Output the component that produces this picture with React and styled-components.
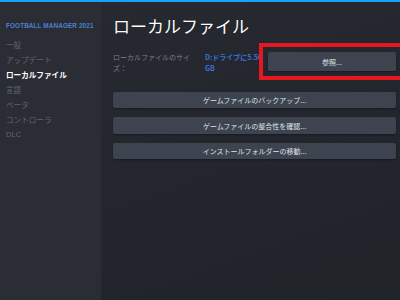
import React from "react";
import styled, { createGlobalStyle } from "styled-components";

// --- ESTILOS ---
const Global = createGlobalStyle`
  html, body {
    margin: 0;
    padding: 0;
    width: 400px;
    height: 300px;
    overflow: hidden;
    background: #23262d;
    font-family: "Noto Sans CJK JP", "Noto Sans", sans-serif;
  }
`;

const Window = styled.div`
  width: 400px;
  height: 300px;
  display: flex;
  flex-direction: column;
  overflow: hidden;
`;

const TopLine = styled.div`
  height: 2px;
  background: #1a9fff;
  flex-shrink: 0;
`;

const Body = styled.div`
  flex: 1;
  display: flex;
  min-height: 0;
`;

const Sidebar = styled.nav`
  width: 101px;
  flex-shrink: 0;
  background: #2a2d34;
  padding: 19px 0 0 6px;
  box-sizing: border-box;
`;

const GameTitle = styled.div`
  font-family: "Liberation Sans", Arial, sans-serif;
  font-size: 6.4px;
  font-weight: bold;
  color: #4f7fd0;
  letter-spacing: 0.1px;
  height: 10px;
  line-height: 10px;
  margin-bottom: 6px;
  white-space: nowrap;
`;

const NavItem = styled.div`
  font-size: 7.6px;
  height: 15px;
  line-height: 15px;
  color: ${(p) => (p.$active ? "#ffffff" : "#61666f")};
  font-weight: ${(p) => (p.$active ? "bold" : "normal")};
  font-family: ${(p) =>
    p.$latin ? '"Liberation Sans", Arial, sans-serif' : '"Noto Sans CJK JP", sans-serif'};
`;

const Main = styled.main`
  flex: 1;
  min-width: 0;
  padding: 12px 0 0 12px;
  overflow: hidden;
  background: linear-gradient(160deg, #262930 0%, #23262d 50%, #202328 100%);
`;

const Title = styled.h1`
  margin: 0 0 5px 0;
  font-size: 17px;
  font-weight: normal;
  color: #ffffff;
  line-height: 24px;
  text-shadow: 0 0 1px rgba(0, 0, 0, 0.5);
`;

const SizeRow = styled.div`
  display: flex;
  align-items: flex-start;
  width: 310px;
`;

const Label = styled.div`
  width: 80px;
  font-size: 7px;
  line-height: 11px;
  color: #7a7f88;
  padding-top: 9px;
  margin-right: 12px;
  word-break: break-all;
`;

const Value = styled.div`
  width: 58px;
  font-size: 7px;
  line-height: 11px;
  font-weight: bold;
  color: #3c6fd6;
  padding-top: 9px;
  margin-right: -4px;
  word-break: break-all;
`;

const Highlight = styled.div`
  flex-shrink: 0;
  border: 4px solid #e8161e;
  padding: 5px;
`;

const Button = styled.div`
  box-sizing: border-box;
  width: ${(p) => p.$width || "283px"};
  height: ${(p) => p.$height || "16px"};
  background: #3d4450;
  border-radius: 2px;
  box-shadow: 0 1px 2px rgba(0, 0, 0, 0.35);
  color: #dfe3e6;
  font-size: 7px;
  display: flex;
  align-items: center;
  justify-content: center;
`;

const Actions = styled.div`
  margin-top: 12px;
  display: flex;
  flex-direction: column;
  gap: 9px;
`;

// --- COMPONENTE ---
const menu = ["一般", "アップデート", "ローカルファイル", "言語", "ベータ", "コントローラ", "DLC"];

export default function App() {
  return (
    <Window>
      <Global />
      <TopLine />
      <Body>
        <Sidebar>
          <GameTitle>FOOTBALL MANAGER 2021</GameTitle>
          {menu.map((m) => (
            <NavItem key={m} $active={m === "ローカルファイル"} $latin={m === "DLC"}>
              {m}
            </NavItem>
          ))}
        </Sidebar>
        <Main>
          <Title>ローカルファイル</Title>
          <SizeRow>
            <Label>ローカルファイルのサイズ：</Label>
            <Value>D:ドライブに5.56 GB</Value>
            <Highlight>
              <Button $width="128px" $height="19px">参照...</Button>
            </Highlight>
          </SizeRow>
          <Actions>
            <Button $height="16px">ゲームファイルのバックアップ...</Button>
            <Button $height="17px">ゲームファイルの整合性を確認...</Button>
            <Button $height="16px">インストールフォルダーの移動...</Button>
          </Actions>
        </Main>
      </Body>
    </Window>
  );
}
